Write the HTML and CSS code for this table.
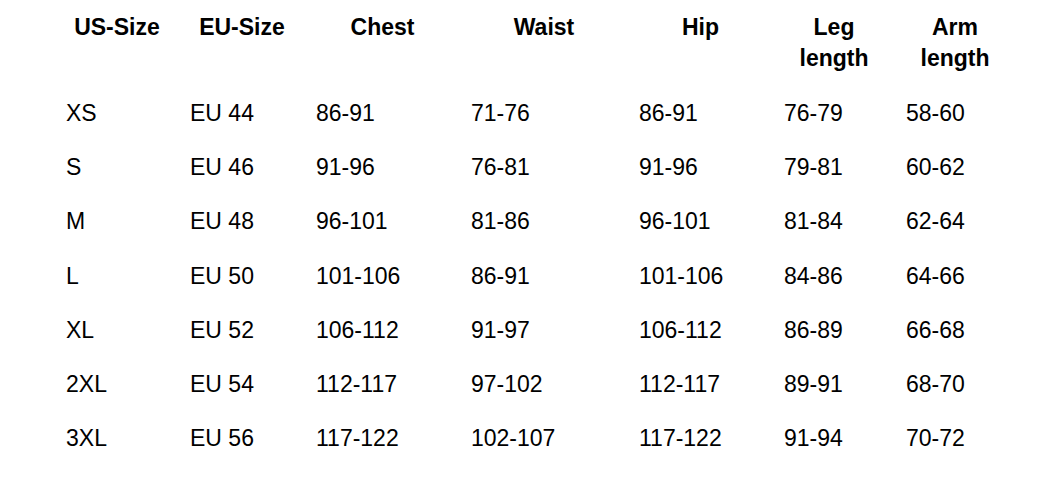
FILE: index.html
```html
<!DOCTYPE html>
<html lang="en">
<head>
<meta charset="utf-8">
<title>Size chart</title>
<link rel="stylesheet" href="styles.css">
</head>
<body>
<table class="sizes">
  <colgroup>
    <col class="c1"><col class="c2"><col class="c3"><col class="c4"><col class="c5"><col class="c6"><col class="c7">
  </colgroup>
  <thead>
    <tr class="head">
      <th>US-Size</th>
      <th>EU-Size</th>
      <th>Chest</th>
      <th>Waist</th>
      <th>Hip</th>
      <th>Leg<br>length</th>
      <th>Arm<br>length</th>
    </tr>
  </thead>
  <tbody>
    <tr><td>XS</td><td>EU 44</td><td>86-91</td><td>71-76</td><td>86-91</td><td>76-79</td><td>58-60</td></tr>
    <tr><td>S</td><td>EU 46</td><td>91-96</td><td>76-81</td><td>91-96</td><td>79-81</td><td>60-62</td></tr>
    <tr><td>M</td><td>EU 48</td><td>96-101</td><td>81-86</td><td>96-101</td><td>81-84</td><td>62-64</td></tr>
    <tr><td>L</td><td>EU 50</td><td>101-106</td><td>86-91</td><td>101-106</td><td>84-86</td><td>64-66</td></tr>
    <tr><td>XL</td><td>EU 52</td><td>106-112</td><td>91-97</td><td>106-112</td><td>86-89</td><td>66-68</td></tr>
    <tr><td>2XL</td><td>EU 54</td><td>112-117</td><td>97-102</td><td>112-117</td><td>89-91</td><td>68-70</td></tr>
    <tr><td>3XL</td><td>EU 56</td><td>117-122</td><td>102-107</td><td>117-122</td><td>91-94</td><td>70-72</td></tr>
  </tbody>
</table>
</body>
</html>
```
FILE: styles.css
```css
html, body {
  margin: 0;
  padding: 0;
  background: #ffffff;
}
body {
  font-family: "Liberation Sans", Arial, sans-serif;
  font-size: 23px;
  color: #000000;
}
.sizes {
  margin-left: 55px;
  border-collapse: collapse;
  border-spacing: 0;
  table-layout: fixed;
  width: 960px;
}
.c1 { width: 124px; }
.c2 { width: 126px; }
.c3 { width: 155px; }
.c4 { width: 168px; }
.c5 { width: 145px; }
.c6 { width: 122px; }
.c7 { width: 120px; }
.sizes th {
  font-weight: bold;
  text-align: center;
  vertical-align: top;
  line-height: 31px;
  padding: 11.5px 11px 12.5px;
}
.sizes td {
  text-align: left;
  vertical-align: top;
  line-height: 54.17px;
  padding: 0 11px;
  white-space: nowrap;
}
```
